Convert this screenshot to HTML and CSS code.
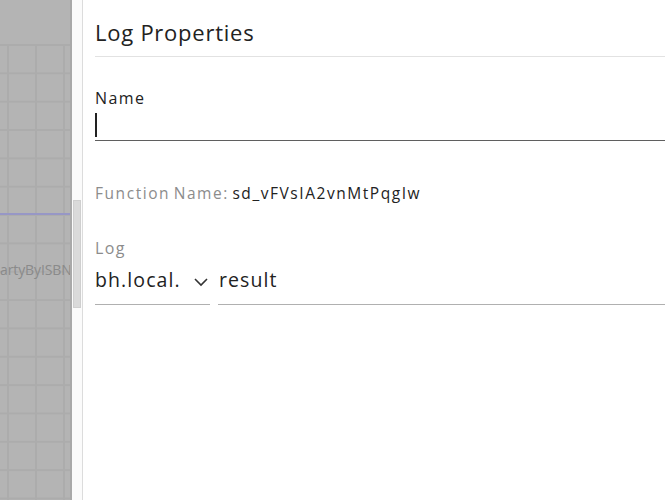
FILE: index.html
```html
<!DOCTYPE html>
<html lang="en">
<head>
<meta charset="utf-8">
<title>Log Properties</title>
<link rel="stylesheet" href="styles.css">
</head>
<body>
<div class="screen">
  <div class="canvas">
    <div class="canvas-toolbar"></div>
    <div class="canvas-grid">
      <div class="edge"></div>
      <div class="node-label">artyByISBN</div>
    </div>
  </div>
  <div class="gutter">
    <div class="thumb"></div>
  </div>
  <aside class="panel">
    <h1 class="panel-title">Log Properties</h1>
    <div class="field name-field">
      <label class="field-label">Name</label>
      <div class="text-input focused"><span class="caret"></span></div>
    </div>
    <div class="function-name">
      <span class="fn-key">Function Name:</span> <span class="fn-value">sd_vFVsIA2vnMtPqgIw</span>
    </div>
    <div class="field log-field">
      <label class="field-label muted">Log</label>
      <div class="log-row">
        <div class="select">
          <span class="select-value">bh.local.</span>
          <svg class="chevron" width="16" height="10" viewBox="0 0 16 10"><path d="M2 2 L8 8 L14 2" fill="none" stroke="#333" stroke-width="1.6"/></svg>
        </div>
        <div class="log-input"><span class="log-value">result</span></div>
      </div>
    </div>
  </aside>
</div>
</body>
</html>
```

FILE: styles.css
```css
* { box-sizing: border-box; }
html, body { margin: 0; padding: 0; }
body {
  width: 665px;
  height: 500px;
  overflow: hidden;
  font-family: "Open Sans", "Lato", sans-serif;
  background: #fff;
}
.screen {
  display: flex;
  height: 500px;
}

/* dimmed flow canvas on the left */
.canvas {
  width: 72px;
  flex: none;
  display: flex;
  flex-direction: column;
  background: #b4b4b4;
  border-right: 2px solid #a9a9a9;
  overflow: hidden;
}
.canvas-toolbar {
  height: 44px;
  flex: none;
}
.canvas-grid {
  position: relative;
  flex: 1;
  background-color: #b4b4b4;
  background-image:
    linear-gradient(to bottom, #acacac 0, #acacac 2px, transparent 2px),
    linear-gradient(to right, #acacac 0, #acacac 2px, transparent 2px);
  background-size: 100% 28.35px, 28px 100%;
  background-position: 0 0, 7px 0;
}
.edge {
  position: absolute;
  left: 0;
  right: 0;
  top: 169px;
  height: 2px;
  background: #9797c6;
}
.node-label {
  position: absolute;
  left: 0;
  top: 216px;
  white-space: nowrap;
  font-size: 14px;
  letter-spacing: -0.1px;
  color: #8a8a8a;
}

/* scroll gutter between canvas and panel */
.gutter {
  width: 11px;
  flex: none;
  background: #fbfbfb;
  border-right: 1px solid #dcdcdc;
  padding-top: 200px;
  padding-left: 1px;
}
.thumb {
  width: 8px;
  height: 108px;
  background: #dadada;
  border: 1px solid #cfcfcf;
}

/* properties panel */
.panel {
  flex: 1;
  padding: 0 0 0 12px;
  color: #222;
}
.panel-title {
  margin: 0;
  height: 57px;
  padding-top: 17px;
  font-size: 22px;
  font-weight: 400;
  line-height: 30px;
  letter-spacing: 0.75px;
  border-bottom: 1px solid #e2e2e2;
}
.field-label {
  display: block;
  font-size: 16px;
  line-height: 20px;
  letter-spacing: 1.4px;
}
.field-label.muted { color: #8c8c8c; }
.name-field { padding-top: 31px; }
.text-input {
  height: 33px;
  border-bottom: 1.5px solid #5f5f5f;
  padding-top: 5px;
}
.caret {
  display: block;
  width: 1.5px;
  height: 24px;
  background: #222;
}
.function-name {
  padding-top: 41px;
  font-size: 15.5px;
  line-height: 22px;
  letter-spacing: 1.55px;
  word-spacing: -2px;
}
.fn-key { color: #8c8c8c; }
.fn-value { color: #222; }
.log-field { padding-top: 34px; }
.log-row {
  display: flex;
  gap: 8px;
  margin-top: 8px;
}
.select {
  width: 115px;
  height: 39px;
  display: flex;
  align-items: center;
  justify-content: space-between;
  border-bottom: 1px solid #b0b0b0;
  padding-right: 1px;
  padding-bottom: 11px;
}
.select-value, .log-value {
  font-size: 19.5px;
  line-height: 28px;
  letter-spacing: 1.1px;
  color: #222;
}
.chevron { margin-top: 5px; }
.log-input {
  flex: 1;
  height: 39px;
  border-bottom: 1px solid #b0b0b0;
  padding-left: 1px;
  padding-bottom: 11px;
  display: flex;
  align-items: center;
}
```
